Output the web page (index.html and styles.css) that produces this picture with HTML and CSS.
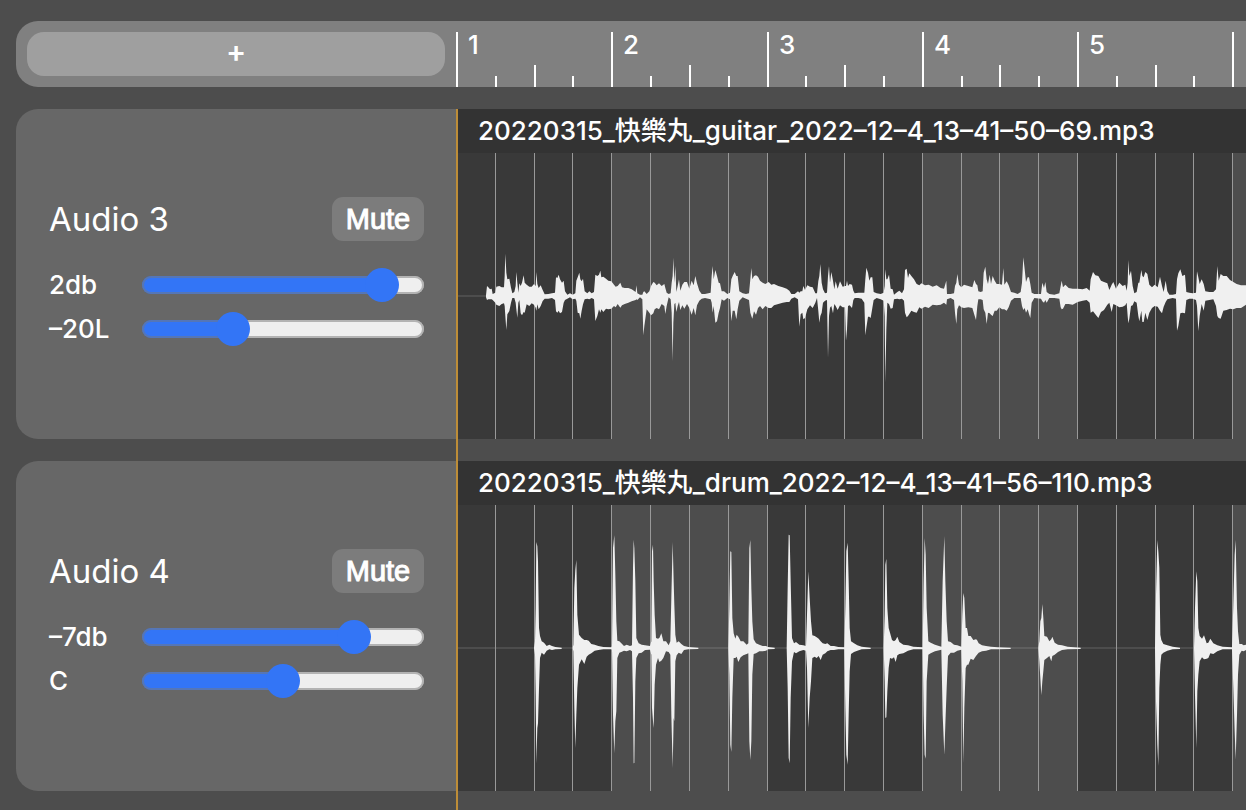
FILE: index.html
```
<!DOCTYPE html>
<html lang="en">
<head>
<meta charset="utf-8">
<meta name="viewport" content="width=device-width, initial-scale=1">
<title>Multitrack editor</title>
<link rel="stylesheet" href="styles.css">
</head>
<body>
<main class="app">
  <header class="topbar">
    <div class="topbar-side"><button class="add" type="button" aria-label="Add track">+</button></div>
    <div class="ruler">
      <svg class="ruler-ticks" aria-hidden="true"></svg>
      <ol class="ruler-labels"></ol>
    </div>
  </header>
  <div class="tracks">
    <section class="track">
      <div class="panel">
        <div class="panel-head"><h2 class="name">Audio 3</h2><button class="mute" type="button">Mute</button></div>
        <div class="control"><label for="vol3">2db</label><input id="vol3" class="slider" type="range" min="-70" max="10" value="2"></div>
        <div class="control"><label for="pan3">–20L</label><input id="pan3" class="slider" type="range" min="-50" max="50" value="-20"></div>
      </div>
      <div class="clip">
        <h3 class="clip-title">20220315_快樂丸_guitar_2022–12–4_13–41–50–69.mp3</h3>
        <svg class="lane" data-wave="guitar" role="img" aria-label="Guitar waveform"></svg>
      </div>
    </section>
    <section class="track">
      <div class="panel">
        <div class="panel-head"><h2 class="name">Audio 4</h2><button class="mute" type="button">Mute</button></div>
        <div class="control"><label for="vol4">–7db</label><input id="vol4" class="slider" type="range" min="-70" max="10" value="-7"></div>
        <div class="control"><label for="pan4">C</label><input id="pan4" class="slider" type="range" min="-50" max="50" value="0"></div>
      </div>
      <div class="clip">
        <h3 class="clip-title">20220315_快樂丸_drum_2022–12–4_13–41–56–110.mp3</h3>
        <svg class="lane" data-wave="drum" role="img" aria-label="Drum waveform"></svg>
      </div>
    </section>
    <div class="playhead"></div>
  </div>
</main>
<script src="editor.js"></script>
</body>
</html>
```

FILE: styles.css
```
* { box-sizing: border-box; }

body {
  margin: 0;
  background: #4d4d4d;
  color: #fff;
  font-family: Inter, "Noto Sans CJK TC", sans-serif;
  font-size: 26px;
  overflow: hidden;
}

button, h2, h3, ol { margin: 0; padding: 0; font: inherit; color: inherit; }
button { border: 0; }

.app {
  display: flex;
  flex-direction: column;
  gap: 22px;
  min-height: 100vh;
  padding: 21px 0 0 16px;
}

.topbar {
  display: grid;
  grid-template-columns: 440px minmax(0, 1fr);
  height: 66px;
  background: #808080;
  border-radius: 22px 0 0 22px;
}
.topbar-side { display: grid; padding: 11px; }
.add {
  padding-bottom: 6px;
  background: #9f9f9f;
  border-radius: 17px;
  font-size: 30px;
  font-weight: 600;
  line-height: 32px;
}

.ruler { display: grid; overflow: hidden; }
.ruler-ticks, .ruler-labels { grid-area: 1 / 1; }
.ruler-ticks { width: 100%; height: 66px; fill: #fff; }
.ruler-labels {
  display: flex;
  padding-top: 8px;
  list-style: none;
  font-weight: 500;
  line-height: 32px;
}
.ruler-labels li { flex: none; padding-left: 12px; }

.tracks {
  position: relative;
  flex: 1;
  display: flex;
  flex-direction: column;
  gap: 22px;
}
.track {
  display: grid;
  grid-template-columns: 442px minmax(0, 1fr);
  height: 330px;
}
.panel {
  display: flex;
  flex-direction: column;
  justify-content: center;
  padding: 0 34px 0 33px;
  background: #676767;
  border-radius: 22px 0 0 22px;
}
.panel-head {
  display: flex;
  align-items: center;
  justify-content: space-between;
  height: 44px;
  margin-bottom: 22px;
}
.name { font-size: 33px; }
.mute {
  width: 92px;
  height: 44px;
  background: #7c7c7c;
  border-radius: 11px;
  font-family: "Liberation Sans", sans-serif;
  font-size: 29px;
  -webkit-text-stroke: 1px #fff;
}
.control {
  display: grid;
  grid-template-columns: 93px minmax(0, 1fr);
  align-items: center;
  height: 44px;
}
.control label { padding-bottom: 2px; font-weight: 500; }

.slider {
  -webkit-appearance: none;
  appearance: none;
  width: 100%;
  height: 34px;
  margin: 0;
  background: none;
}
.slider::-webkit-slider-runnable-track {
  height: 18px;
  border-radius: 9px;
  background: linear-gradient(to right, #3375f6 var(--fill), #efefef var(--fill));
  box-shadow: inset 0 0 0 2px rgba(120, 120, 120, 0.5);
}
.slider::-webkit-slider-thumb {
  -webkit-appearance: none;
  width: 34px;
  height: 34px;
  margin-top: -8px;
  border-radius: 50%;
  background: #3375f6;
}

.clip { display: flex; flex-direction: column; overflow: hidden; }
.clip-title {
  height: 44px;
  padding-left: 20px;
  background: #333;
  font-weight: 500;
  line-height: 44px;
  white-space: nowrap;
}
.lane { display: block; width: 100%; height: 286px; background: #393939; }
.lane .band { fill: #4d4d4d; }
.lane .beat { fill: #999; }
.lane .axis { fill: #fff; fill-opacity: 0.1; }
.lane .wave { fill: #f0f0f0; }

.playhead {
  position: absolute;
  top: 0;
  bottom: 0;
  left: 440px;
  width: 2px;
  background: #bd8d38;
}
```

FILE: editor.js
```
const BEAT = 38.815;
const BARS = 24;
const PLAYHEAD = 2;
const LABEL_ROOM = 40;
const beatX = (n) => Math.round(n * BEAT);
const rect = (cls, x, y, w, h) => `<rect class="${cls}" x="${x}" y="${y}" width="${w}" height="${h}"/>`;

const ruler = document.querySelector(".ruler");
function drawRuler() {
  let ticks = "", labels = "";
  for (let n = 0; n < BARS * 4; n++) {
    const h = n % 4 === 0 ? 55 : n % 2 === 0 ? 22 : 11;
    ticks += rect("tick", beatX(n), 66 - h, 2, h);
    // A bar is numbered only when its label fits in the visible ruler.
    if (n % 4 === 0 && beatX(n) + LABEL_ROOM < ruler.clientWidth) {
      labels += `<li style="width:${beatX(n + 4) - beatX(n)}px">${n / 4 + 1}</li>`;
    }
  }
  document.querySelector(".ruler-ticks").innerHTML = ticks;
  document.querySelector(".ruler-labels").innerHTML = labels;
}
drawRuler();
window.addEventListener("resize", drawRuler);

// Peaks are "time,above,below", grouped by the time at which each chunk starts.
const peaks = {
  guitar: [
    [-24, "108,2,2;111,30,12;115,26,10;120,20,10;125,22,10;128,6,12;136,10,20;139,28,26;148,30,30;155,26,24;162,26,22;164,60,30;166,127,60;169,70,102;172,50,55;178,52,45;183,25,20;187,8,6;193,12,6;197,30,20;199,72,40;202,40,65;205,10,20;208,38,12;212,30,52;216,40,58;221,62,48;224,40,50;230,34,25;238,28,30;245,28,22;252,36,26;257,30,35;259,72,44;262,36,25;266,24,40;272,32,30;278,18,15;284,5,8;295,6,8;306,8,6;315,10,12;318,56,46;322,54,50;326,64,44;330,50,52;336,40,48;341,46,20;345,14,12;352,4,8;360,8,4;368,4,10;376,8,8;379,46,14;383,56,50;388,70,52;391,50,68;395,44,44;399,52,25;404,14,10;412,8,8;418,14,10;425,8,6;432,12,10;436,64,75;442,60,60;447,64,40;451,76,50;454,56,40;460,58,48;468,52,38;475,46,40;484,44,38;492,34,30;497,28,34;503,30,24;511,40,35;516,26,28;524,24,24;535,24,20;545,20,16;557,12,12;559,32,10;562,8,12;570,4,4;577,4,10;580,12,118;583,14,90;590,6,40;598,14,50;603,30,58;610,42,52;614,40,40;620,32,36;627,38,40;635,30,24;643,36,30;646,24,54;650,10,30;656,6,4;662,8,10;665,40,50;668,60,196;670,115,80;673,40,25;676,90,20;679,12,48;683,30,30;687,50,18;691,16,42;697,34,28;703,42,38;711,42,24;718,22,36;725,46,56;731,32,36;736,60,58;741,38,28;748,16,14;755,6,8;765,6,6;775,8,8;782,10,10;785,60,20;788,90,50;791,50,30;796,78,80;801,60,76;806,40,50;810,38,36"],
    [756, "35,14,10;42,14,14;52,6,6;60,10,10;64,50,76;68,60,44;74,72,44;79,60,70;83,60,40;88,14,14;98,8,4;108,6,8;117,8,12;121,50,50;124,84,60;127,50,68;132,60,46;138,62,56;144,58,36;150,46,30;158,40,40;166,36,30;176,42,36;184,34,36;192,36,28;205,30,24;218,26,20;230,22,18;238,16,18;244,6,8;254,6,4;264,14,10;268,10,92;272,14,55;277,14,50;280,30,70;285,18,66;292,32,40;300,28,28;308,26,36;316,8,20;321,8,6;325,45,45;328,60,80;331,96,60;335,40,50;339,20,20;345,8,14;351,10,12;354,60,185;357,90,60;360,40,35;364,72,30;369,46,52;373,20,24;377,44,30;383,22,42;390,44,28;398,28,34;405,30,34;408,30,134;411,46,100;414,30,30;419,36,28;426,34,36;430,16,12;434,8,6;445,10,6;455,10,8;463,10,20;466,50,118;469,85,95;474,70,62;478,46,62;482,56,66;487,56,36;491,12,12;500,8,6;512,6,10;521,10,14;524,30,60;526,80,258;529,50,100;532,50,20;537,64,24;542,22,38;548,20,36;552,4,10;562,12,8;568,16,10;576,8,8;582,20,14;585,78,50;590,82,64;594,54,60;598,68,54;604,60,44;612,50,48;620,36,50;628,32,34;634,38,38;645,32,32;656,34,36;668,28,26;680,32,28;692,24,26;702,22,20;709,46,26;711,6,10;722,6,6;732,8,12;735,30,50;739,40,84;742,66,40;747,34,28;754,26,34;762,34,36;775,30,34;787,26,36;793,48,56"],
    [1554, "0,36,72;4,32,30;7,14,10;14,12,10;20,14,12;23,70,40;28,88,50;32,50,84;36,36,50;41,64,52;45,36,56;50,60,60;56,46,44;62,36,44;70,36,34;78,34,40;82,84,40;85,34,40;92,44,44;98,32,34;105,12,14;115,10,6;125,6,6;134,12,6;138,40,30;142,116,42;146,80,36;150,42,50;155,56,40;159,56,54;163,36,66;167,10,20;175,6,6;195,6,8;199,40,16;204,24,20;208,42,12;212,12,20;220,6,6;235,4,6;250,8,8;254,30,34;257,46,40;261,26,38;268,34,24;278,24,24;290,22,26;305,22,18;320,20,14;332,24,12;341,16,20;344,50,50;351,72,46;358,62,55;367,60,66;375,46,48;384,42,42;394,38,26;400,18,20;407,34,48;412,42,24;420,22,28;430,40,34;440,30,32;448,34,28;452,16,20;455,40,60;457,108,82;460,60,68;465,76,30;470,30,28;475,8,16;482,12,20;487,40,60;490,40,76;496,78,44;499,60,78;503,56,78;508,72,50;514,66,72;520,34,50;528,26,36;536,34,30;545,26,32;552,58,44;558,30,52;563,12,32;569,46,18;574,14,10;580,4,8;590,4,6;600,6,8;603,50,104;607,68,90;613,80,52;619,60,50;627,64,52;631,12,12;640,10,8;650,8,8;660,10,12;663,74,30;667,56,106;671,36,60;677,50,24;683,36,44;688,14,14;700,12,12;712,12,10;720,20,30;724,90,60;728,46,66;734,66,68;742,60,44;752,60,42;762,48,38;772,42,40;782,36,36;795,32,36;810,32,26;880,4,4"]
  ],
  drum: [
    [-24, "252,0,0;255,20,20;257,120,140;259,318,346;262,305,240;264,260,226;267,60,120;270,36,30;275,20,14;282,16,20;290,6,8;298,10,4;306,6,6;316,3,3;335,0,1;368,0,0;370,10,10;373,180,180;376,235,300;379,264,200;382,100,120;387,40,50;395,30,34;403,24,48;410,24,26;416,22,20;424,12,16;434,10,8;445,6,6;460,3,4;484,2,2;486,5,5;489,300,200;493,338,316;496,220,220;499,80,190;502,22,30;508,20,14;514,14,12;522,6,8;530,10,10;540,6,6;546,8,10;549,240,150;551,325,346;553,300,345;556,200,100;559,30,30;566,14,16;575,10,14;585,8,6;600,6,5;604,20,20;606,290,180;609,310,220;611,200,240;614,100,110;618,30,50;624,28,30;628,30,42;634,44,38;640,20,30;648,20,10;656,8,12;661,20,20;664,150,200;668,318,360;671,200,210;673,130,220;676,40,40;680,16,22;686,20,14;694,12,18;702,6,6;715,3,4;745,0,2"],
    [756, "55,0,0;58,120,80;61,290,290;64,288,312;67,90,150;71,44,30;76,28,30;80,40,26;85,34,42;92,20,28;100,20,22;110,10,18;115,14,16;118,300,280;121,324,336;124,180,280;127,80,80;131,26,18;138,14,16;148,10,10;158,6,10;168,6,8;174,3,4;194,0,2;230,0,0;233,180,120;236,340,330;239,338,346;242,200,150;246,30,40;252,14,12;258,18,16;268,10,10;280,8,6;288,6,8;291,100,60;295,230,240;299,150,150;303,80,100;307,38,30;314,36,26;320,32,30;326,28,24;332,20,36;338,14,20;346,12,16;352,14,10;362,6,6;372,6,6;385,3,4;403,2,2;406,120,180;409,290,320;413,316,350;416,200,200;419,60,70;423,20,18;432,14,12;442,8,8;455,4,4;482,0,1;521,0,0;524,100,100;526,250,210;529,268,208;532,120,130;536,60,60;540,46,30;546,24,32;552,20,28;557,24,42;562,34,22;568,18,18;580,10,16;594,8,8;610,4,4;638,2,2;641,200,200;644,330,320;647,280,332;650,120,100;655,20,20;662,16,16;675,10,10;694,4,5;698,200,200;703,336,320;706,200,230;710,80,120;714,20,24;722,18,14;732,10,14;742,8,8;754,4,5;757,100,100;760,165,345;763,150,180;767,60,60;771,60,50;775,36,50;782,36,32;790,24,36;798,26,24"],
    [1554, "3,24,20;8,14,14;18,8,10;30,6,8;45,4,4;65,2,2;104,0,1;187,0,0;190,20,40;193,80,90;196,90,142;199,132,100;202,90,70;205,36,36;213,34,30;220,20,24;226,26,40;229,34,24;236,16,20;246,10,12;258,8,6;275,4,4;314,0,1;537,0,0;540,160,160;544,324,290;547,290,354;550,240,120;553,40,50;556,24,20;562,12,14;574,8,8;590,4,4;612,0,1;654,0,0;657,120,140;661,230,300;664,200,130;667,60,80;671,36,40;678,28,28;684,38,34;692,14,32;697,16,30;703,28,16;712,14,18;724,8,10;740,4,4;768,2,2;772,130,120;776,280,250;779,324,335;783,120,200;786,50,80;790,12,20;797,12,8;803,8,10;810,10,6;850,0,0"]
  ]
};

// Sound keeps a visible minimum thickness; where it stops, the shape ends with a square edge.
function readPeaks(chunks) {
  const pts = [];
  for (const [start, data] of chunks) {
    for (const p of data.split(";")) {
      const [t, up, down] = p.split(",").map(Number);
      if (up > 0) pts.push([start + t, Math.max(up, 2), Math.max(down, 4)]);
      else {
        if (down > 0) pts.push([start + t, 1, 3]);
        pts.push([start + t, 0, 0]);
      }
    }
  }
  return pts;
}

document.querySelectorAll(".lane").forEach((lane) => {
  let out = "";
  for (let b = 1; b < BARS; b += 2) {
    out += rect("band", beatX(b * 4) - PLAYHEAD, 0, beatX(b * 4 + 4) - beatX(b * 4), 286);
  }
  out += rect("axis", 0, 142, 4000, 2);
  for (let n = 1; n < BARS * 4; n++) out += rect("beat", beatX(n) - PLAYHEAD, 0, 1, 286);
  const pts = readPeaks(peaks[lane.dataset.wave]);
  const top = pts.map(([t, up]) => `${t},${-up}`);
  const bottom = pts.map(([t, , down]) => `${t},${down}`).reverse();
  out += `<g transform="translate(0 143) scale(${1 / 3})"><polygon class="wave" points="${top.concat(bottom).join(" ")}"/></g>`;
  lane.innerHTML = out;
});

document.querySelectorAll(".slider").forEach((s) => {
  const update = () => s.style.setProperty("--fill", `${(s.value - s.min) / (s.max - s.min) * 100}%`);
  s.addEventListener("input", update);
  update();
});
```
